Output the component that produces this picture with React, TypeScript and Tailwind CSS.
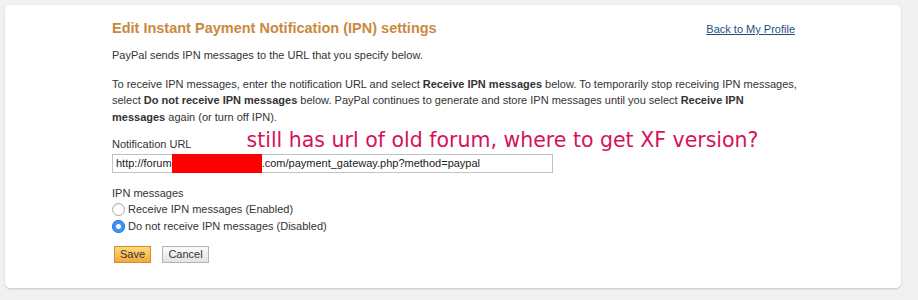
import { useState } from "react";

const body = "font-['Liberation_Sans',Arial,sans-serif]";

function Radio({ checked, onClick, label }: { checked: boolean; onClick: () => void; label: string }) {
  return (
    <label className="flex h-[17px] cursor-pointer items-center" onClick={onClick}>
      {checked ? (
        <span className="mr-[3px] flex h-[13px] w-[13px] items-center justify-center rounded-full bg-[#3d93f5] shadow-[inset_0_0_0_1px_#2f7fe0]">
          <span className="h-[5px] w-[5px] rounded-full bg-white" />
        </span>
      ) : (
        <span className="mr-[3px] h-[13px] w-[13px] rounded-full border border-[#a9a9a9] bg-white shadow-[inset_0_1px_1px_rgba(0,0,0,0.08)]" />
      )}
      <span>{label}</span>
    </label>
  );
}

export default function App() {
  const [recibir, setRecibir] = useState(false);

  return (
    <div className={`h-[300px] bg-[#f1f1f1] pl-[5px] pt-[5px] ${body}`}>
      <div className="h-[283px] w-[896px] rounded-[5px] bg-white shadow-[0_1px_2px_rgba(0,0,0,0.18)]">
        <div className="w-[789px] pl-[107px] pt-[13px] text-[11px] leading-[16.5px] text-[#333]">
          <div className="flex items-baseline justify-between">
            <h1 className="text-[14.5px] font-bold leading-[20px] text-[#c98940]">
              Edit Instant Payment Notification (IPN) settings
            </h1>
            <a href="#" className="mr-[-1px] text-[11px] text-[#1d4f7c] underline">
              Back to My Profile
            </a>
          </div>

          <p className="mt-[9px]">PayPal sends IPN messages to the URL that you specify below.</p>

          <p className="mt-[12px] whitespace-nowrap">
            To receive IPN messages, enter the notification URL and select <b>Receive IPN messages</b> below. To
            temporarily stop receiving IPN messages,
            <br />
            select <b>Do not receive IPN messages</b> below. PayPal continues to generate and store IPN messages until
            you select <b>Receive IPN</b>
            <br />
            <b>messages</b> again (or turn off IPN).
          </p>

          <div className="mt-[4px] flex h-[23px] items-start">
            <span className="mt-[7px] leading-[16px]">Notification URL</span>
            <span className="ml-[55px] whitespace-nowrap font-['DejaVu_Sans',Verdana,sans-serif] text-[20.5px] leading-[22px] text-[#d6125a]">
              still has url of old forum, where to get XF version?
            </span>
          </div>

          <div className="mt-[2px] flex h-[19px] w-[441px] items-center border border-[#b9c3cc] pl-[3px] text-[11px] text-[#222]">
            <span>http://forum</span>
            <span className="h-[19px] w-[90px] bg-[#ff0000]" />
            <span>.com/payment_gateway.php?method=paypal</span>
          </div>

          <div className="mt-[12px] leading-[16px]">IPN messages</div>
          <div className="flex flex-col">
            <Radio checked={recibir} onClick={() => setRecibir(true)} label="Receive IPN messages (Enabled)" />
            <Radio checked={!recibir} onClick={() => setRecibir(false)} label="Do not receive IPN messages (Disabled)" />
          </div>

          <div className="ml-[2px] mt-[11px] flex gap-[11px]">
            <button className="h-[17px] w-[37px] border border-[#d08f2e] bg-gradient-to-b from-[#ffd97a] to-[#f3a83a] text-[11px] leading-[15px] text-[#333]">
              Save
            </button>
            <button className="h-[17px] w-[47px] border border-[#b3b3b3] bg-gradient-to-b from-[#fbfbfb] to-[#e3e3e3] text-[11px] leading-[15px] text-[#333]">
              Cancel
            </button>
          </div>
        </div>
      </div>
    </div>
  );
}
